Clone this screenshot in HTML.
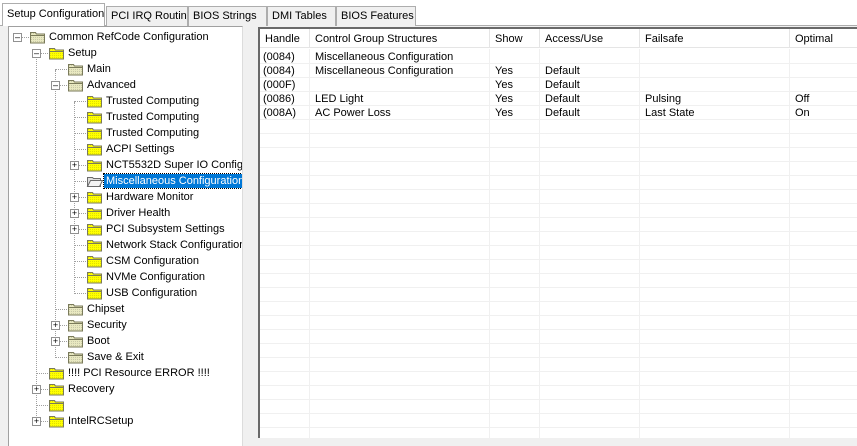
<!DOCTYPE html>
<html><head><meta charset="utf-8"><style>
*{margin:0;padding:0;box-sizing:border-box}
body{width:857px;height:438px;overflow:hidden;background:#f0f0f0;font:11px "Liberation Sans",sans-serif;color:#000;position:relative}
.a{position:absolute;white-space:nowrap}
.tab{position:absolute;top:6px;height:20px;border:1px solid #adadad;border-bottom:none;background:#f0f0f0;padding:3px 0 0 4px;font-size:11px;white-space:nowrap;overflow:hidden}
.tab.sel{top:3px;height:23px;background:#fff;z-index:2;padding-top:4px}
#tree{position:absolute;left:8px;top:26px;width:235px;height:420px;background:#fff;border-left:1px solid #a0a0a0;border-top:1px solid #a0a0a0;border-right:1px solid #dcdcdc;overflow:hidden}
.r{position:absolute;height:16px;left:0;right:0}
.t{position:absolute;top:1px;line-height:14px;white-space:nowrap;font-size:11px}
.f{position:absolute;top:2px;width:17px;height:13px}
.bx{position:absolute;top:4px;width:9px;height:9px;border:1px solid #919191;background:#fff;font-size:9px;line-height:7px;text-align:center;color:#000}
.hd{position:absolute;top:8px;height:1px;border-top:1px dotted #a0a0a0}
.vd{position:absolute;width:1px;border-left:1px dotted #a0a0a0}
.sel2{background:#0078d7;color:#fff;outline:1px dotted #000;padding:0 2px;margin-left:-2px}
#list{position:absolute;left:258px;top:27px;width:599px;height:411px;background:#fff;border-left:2px solid #696969;border-top:2px solid #696969;overflow:hidden;font-size:11px}
.hdr{position:absolute;top:0;height:18px;border-right:1px solid #e5e5e5;padding:4px 0 0 5px;line-height:13px;background:#fff;white-space:nowrap}
.grid{position:absolute;left:0;right:0;top:21px;bottom:0;background:repeating-linear-gradient(to bottom,transparent 0,transparent 13px,#f0f0f0 13px,#f0f0f0 14px)}
.cl{position:absolute;top:20px;bottom:0;width:1px;background:#f0f0f0}
.c{position:absolute;line-height:14px;white-space:nowrap;margin-top:1px}
</style></head><body>
<div style="position:absolute;left:0;top:0;width:857px;height:26px;background:#fff"></div>
<div style="position:absolute;left:0;top:25px;width:857px;height:1px;background:#adadad"></div>
<div class="tab sel" style="left:2px;width:103px">Setup Configuration</div>
<div class="tab" style="left:106px;width:82px">PCI IRQ Routing</div>
<div class="tab" style="left:188px;width:79px">BIOS Strings</div>
<div class="tab" style="left:267px;width:69px">DMI Tables</div>
<div class="tab" style="left:336px;width:80px">BIOS Features</div>

<div id="tree">
<svg width="0" height="0" style="position:absolute"><defs>
<pattern id="ck" width="2" height="2" patternUnits="userSpaceOnUse"><rect width="2" height="2" fill="#ffff00"/><rect width="1" height="1" fill="#e0e000"/></pattern>
<pattern id="cg" width="2" height="2" patternUnits="userSpaceOnUse"><rect width="2" height="2" fill="#e8e8c0"/><rect width="1" height="1" fill="#c8c8a8"/></pattern>
</defs></svg>
<div class="vd" style="left:27px;top:27px;height:368px"></div>
<div class="vd" style="left:46px;top:43px;height:288px"></div>
<div class="vd" style="left:65px;top:75px;height:192px"></div>
<div id="rows"></div>
</div>

<div id="list">
<div class="grid"></div>
<div class="cl" style="left:49px"></div>
<div class="cl" style="left:229px"></div>
<div class="cl" style="left:279px"></div>
<div class="cl" style="left:379px"></div>
<div class="cl" style="left:529px"></div>
<div class="hdr" style="left:0;width:50px">Handle</div>
<div class="hdr" style="left:50px;width:180px">Control Group Structures</div>
<div class="hdr" style="left:230px;width:50px">Show</div>
<div class="hdr" style="left:280px;width:100px">Access/Use</div>
<div class="hdr" style="left:380px;width:150px">Failsafe</div>
<div class="hdr" style="left:530px;width:80px;border-right:none">Optimal</div>
<div class="a" style="left:0;top:18px;width:599px;height:1px;background:#e5e5e5"></div>

<div class="c" style="left:3px;top:20px">(0084)</div><div class="c" style="left:55px;top:20px">Miscellaneous Configuration</div>
<div class="c" style="left:3px;top:34px">(0084)</div><div class="c" style="left:55px;top:34px">Miscellaneous Configuration</div><div class="c" style="left:235px;top:34px">Yes</div><div class="c" style="left:285px;top:34px">Default</div>
<div class="c" style="left:3px;top:48px">(000F)</div><div class="c" style="left:235px;top:48px">Yes</div><div class="c" style="left:285px;top:48px">Default</div>
<div class="c" style="left:3px;top:62px">(0086)</div><div class="c" style="left:55px;top:62px">LED Light</div><div class="c" style="left:235px;top:62px">Yes</div><div class="c" style="left:285px;top:62px">Default</div><div class="c" style="left:385px;top:62px">Pulsing</div><div class="c" style="left:535px;top:62px">Off</div>
<div class="c" style="left:3px;top:76px">(008A)</div><div class="c" style="left:55px;top:76px">AC Power Loss</div><div class="c" style="left:235px;top:76px">Yes</div><div class="c" style="left:285px;top:76px">Default</div><div class="c" style="left:385px;top:76px">Last State</div><div class="c" style="left:535px;top:76px">On</div>
</div>

<script>
var items=[
[0,'-','g','Common RefCode Configuration'],
[1,'-','y','Setup'],
[2,'','g','Main'],
[2,'-','g','Advanced'],
[3,'','y','Trusted Computing'],
[3,'','y','Trusted Computing'],
[3,'','y','Trusted Computing'],
[3,'','y','ACPI Settings'],
[3,'+','y','NCT5532D Super IO Configuration'],
[3,'','o','Miscellaneous Configuration'],
[3,'+','y','Hardware Monitor'],
[3,'+','y','Driver Health'],
[3,'+','y','PCI Subsystem Settings'],
[3,'','y','Network Stack Configuration'],
[3,'','y','CSM Configuration'],
[3,'','y','NVMe Configuration'],
[3,'','y','USB Configuration'],
[2,'','g','Chipset'],
[2,'+','g','Security'],
[2,'+','g','Boot'],
[2,'','g','Save & Exit'],
[1,'','y','!!!! PCI Resource ERROR !!!!'],
[1,'+','y','Recovery'],
[1,'','y',''],
[1,'+','y','IntelRCSetup']];
var h='';
items.forEach(function(it,i){
 var L=it[0],top=2+16*i,bx=4+19*L,fx=20+19*L,tx=40+19*L;
 h+='<div class="r" style="top:'+top+'px">';
 h+='<div class="hd" style="left:'+(bx+4)+'px;width:'+(fx-bx-4)+'px"></div>';
 if(it[1]) h+='<div class="bx" style="left:'+bx+'px">'+(it[1]=='-'?'&#8211;':'+')+'</div>';
 var fill=it[2]=='g'?'url(#cg)':'url(#ck)';
 if(it[2]=='o') h+='<svg class="f" style="left:'+fx+'px" viewBox="0 0 17 13"><path d="M1.5 2.5h5l1 1h7v8h-13z" fill="#e0e0e0" stroke="#6b6b6b"/><path d="M1.5 11.5l3-6h12l-3 6z" fill="#f4f4f4" stroke="#6b6b6b"/></svg>';
 else h+='<svg class="f" style="left:'+fx+'px" viewBox="0 0 17 13"><path d="M1.5 1.5h5l1 1.5h8v9h-14z" fill="'+fill+'" stroke="#7a7a5a"/><path d="M1.5 4.5h14" stroke="#7a7a5a"/></svg>';
 h+='<div class="t'+(i==9?' sel2':'')+'" style="left:'+tx+'px">'+it[3].replace('&','&amp;')+'</div></div>';
});
document.getElementById('rows').innerHTML=h;
</script>
</body></html>
